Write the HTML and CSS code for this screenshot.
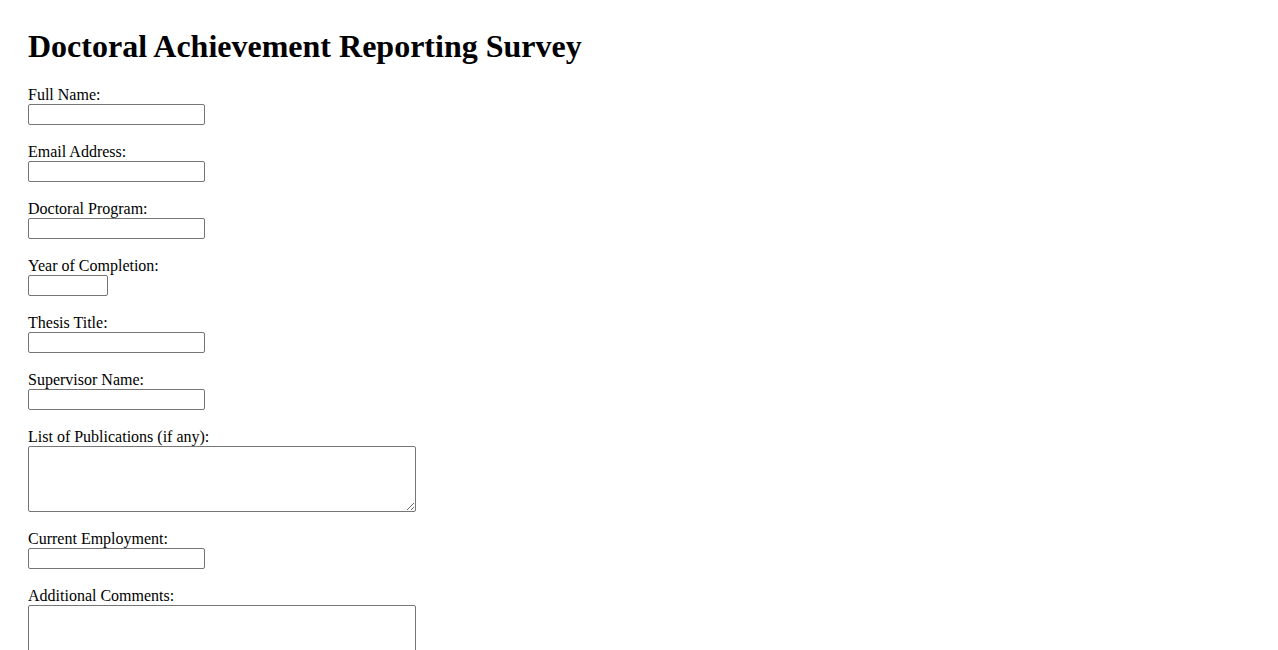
FILE: index.html
```html
<!DOCTYPE html>
<html lang="en">
<head>
<meta charset="utf-8">
<title>Doctoral Achievement Reporting Survey</title>
<link rel="stylesheet" href="styles.css">
</head>
<body>
<h1 class="title">Doctoral Achievement Reporting Survey</h1>
<form class="survey">
  <label for="name">Full Name:</label><br>
  <input class="field" type="text" id="name"><br><br>
  <label for="email">Email Address:</label><br>
  <input class="field" type="email" id="email"><br><br>
  <label for="program">Doctoral Program:</label><br>
  <input class="field" type="text" id="program"><br><br>
  <label for="year">Year of Completion:</label><br>
  <input class="field field-short" type="text" id="year"><br><br>
  <label for="thesis">Thesis Title:</label><br>
  <input class="field" type="text" id="thesis"><br><br>
  <label for="supervisor">Supervisor Name:</label><br>
  <input class="field" type="text" id="supervisor"><br><br>
  <label for="pubs">List of Publications (if any):</label><br>
  <textarea class="area" id="pubs"></textarea><br><br>
  <label for="employment">Current Employment:</label><br>
  <input class="field" type="text" id="employment"><br><br>
  <label for="comments">Additional Comments:</label><br>
  <textarea class="area" id="comments"></textarea><br><br>
  <button class="submit" type="submit">Submit</button>
</form>
</body>
</html>
```
FILE: styles.css
```css
body {
  margin: 8px;
  padding: 20px;
  font-family: "Liberation Serif", "Times New Roman", serif;
  font-size: 16px;
  color: #000;
  background: #fff;
}
.title {
  font-size: 32px;
  font-weight: bold;
  margin: 0 0 21px 0;
}
.field {
  box-sizing: border-box;
  width: 177px;
  height: 21px;
  border: 1px solid #767676;
  border-radius: 2px;
  padding: 1px 2px;
  font-family: "Liberation Sans", Arial, sans-serif;
  font-size: 13.333px;
  background: #fff;
}
.field-short {
  width: 80px;
}
.area {
  box-sizing: border-box;
  width: 388px;
  height: 66px;
  border: 1px solid #767676;
  border-radius: 2px;
  padding: 2px;
  font-family: "Liberation Mono", monospace;
  font-size: 13.333px;
  background: #fff;
  vertical-align: bottom;
}
.submit {
  font-family: "Liberation Sans", Arial, sans-serif;
  font-size: 13.333px;
}
```
